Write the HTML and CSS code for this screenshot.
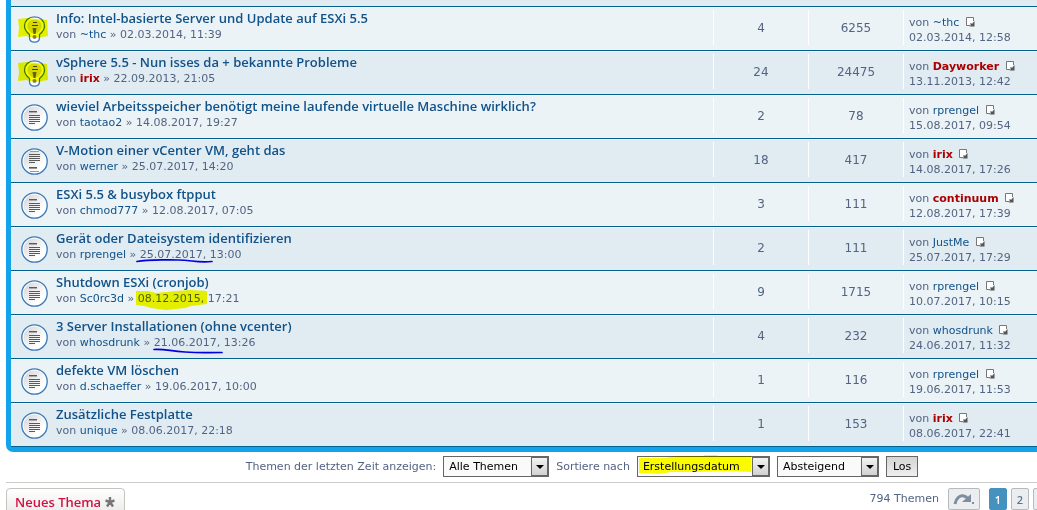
FILE: index.html
```html
<!DOCTYPE html>
<html lang="de">
<head>
<meta charset="utf-8">
<title>Themen</title>
<link rel="stylesheet" href="styles.css">
</head>
<body>
<svg class="defs" aria-hidden="true">
  <defs>
    <linearGradient id="disc" x1="0" y1="0" x2="1" y2="1"><stop offset="0" stop-color="#d4d4d8"/><stop offset=".75" stop-color="#fff"/></linearGradient>
    <symbol id="topic" viewBox="0 0 27 27">
      <circle cx="13.5" cy="13.5" r="12.700" fill="#fff" stroke="#3a7ab8" stroke-width="1.300"/>
      <circle cx="13.5" cy="13.5" r="11" fill="url(#disc)"/>
      <path d="M8 7.500h8M8 11.500h11M8 13.500h11M8 15.500h11M8 17.500h11M8 19.500h6" stroke="#5a5a5a"/>
      <path d="M8 8.500h8" stroke="#aaa"/>
    </symbol>
    <symbol id="topic-own" viewBox="0 0 27 27">
      <circle cx="13.5" cy="13.5" r="12.700" fill="#fff" stroke="#3a7ab8" stroke-width="1.300"/>
      <circle cx="13.5" cy="13.5" r="11" fill="url(#disc)"/>
      <path d="M8 6.500h11M8 8.500h11M8 10.500h11M8 12.500h11M8 14.500h6M8 19.500h8" stroke="#5a5a5a"/>
      <path d="M9 3.500h9M8 20.500h8M9 23.500h9" stroke="#999"/>
    </symbol>
    <symbol id="sticky" viewBox="0 0 27 27">
      <path d="M13.500.8C7.500.8 3.500 4.800 3.500 10c0 4 2.300 6.200 4.600 8C8.800 18.500 8.500 20 8.500 21.500c0 3 2.200 4.700 5 4.700s5-1.700 5-4.700c0-1.500-.3-3 .4-3.500 2.300-1.800 4.600-4 4.600-8 0-5.200-4-9.200-10-9.200z" fill="#fff" stroke="#3a7ab8" stroke-width="1.300"/>
      <path d="M13.500 3.500C9 3.500 6.300 6.500 6.300 10c0 3.500 2.500 5.500 4.500 7.300h5.400c2-1.800 4.500-3.800 4.500-7.300 0-3.500-2.700-6.500-7.200-6.500z" fill="#dddde2"/>
      <path d="M12 6.500h4M11 9.500h6" stroke="#444"/>
      <path d="M11.500 12h4l-1 6h-2z" fill="#666"/><circle cx="13.500" cy="21" r="2" fill="#888"/>
    </symbol>
    <symbol id="latest" viewBox="0 0 9 10">
      <path d="M7.500 4V.5h-7v8H4" fill="#fff" stroke="#777"/>
      <path d="M8.500 4v5.500H3.500L5 8l-1-1 1-1 1 1z" fill="#555"/>
    </symbol>
    <symbol id="bulb-mark" viewBox="0 0 30 20"><path d="M0 1l9-1 20 2 1 16-12 2-10-2-8 1 1-9z" fill="#f6fa00"/></symbol>
  </defs>
</svg>
<div class="page">
  <main class="forum">
    <table class="topics">
      <tbody>
        <tr>
          <td class="icon"><svg class="state"><use href="#sticky"/></svg><svg class="bulb-mark"><use href="#bulb-mark"/></svg></td>
          <td class="topic"><a class="title" href="#">Info: Intel-basierte Server und Update auf ESXi 5.5</a><div>von <a href="#">~thc</a> » 02.03.2014, 11:39</div></td>
          <td class="count"><div>4</div></td><td class="count"><div>6255</div></td>
          <td class="last"><div>von <a href="#">~thc</a> <a href="#" aria-label="Neuester Beitrag"><svg class="latest"><use href="#latest"/></svg></a><br>02.03.2014, 12:58</div></td>
        </tr>
        <tr>
          <td class="icon"><svg class="state"><use href="#sticky"/></svg><svg class="bulb-mark"><use href="#bulb-mark"/></svg></td>
          <td class="topic"><a class="title" href="#">vSphere 5.5 - Nun isses da + bekannte Probleme</a><div>von <a class="mod" href="#">irix</a> » 22.09.2013, 21:05</div></td>
          <td class="count"><div>24</div></td><td class="count"><div>24475</div></td>
          <td class="last"><div>von <a class="mod" href="#">Dayworker</a> <a href="#" aria-label="Neuester Beitrag"><svg class="latest"><use href="#latest"/></svg></a><br>13.11.2013, 12:42</div></td>
        </tr>
        <tr>
          <td class="icon"><svg class="state"><use href="#topic"/></svg></td>
          <td class="topic"><a class="title" href="#">wieviel Arbeitsspeicher benötigt meine laufende virtuelle Maschine wirklich?</a><div>von <a href="#">taotao2</a> » 14.08.2017, 19:27</div></td>
          <td class="count"><div>2</div></td><td class="count"><div>78</div></td>
          <td class="last"><div>von <a href="#">rprengel</a> <a href="#" aria-label="Neuester Beitrag"><svg class="latest"><use href="#latest"/></svg></a><br>15.08.2017, 09:54</div></td>
        </tr>
        <tr>
          <td class="icon"><svg class="state"><use href="#topic-own"/></svg></td>
          <td class="topic"><a class="title" href="#">V-Motion einer vCenter VM, geht das</a><div>von <a href="#">werner</a> » 25.07.2017, 14:20</div></td>
          <td class="count"><div>18</div></td><td class="count"><div>417</div></td>
          <td class="last"><div>von <a class="mod" href="#">irix</a> <a href="#" aria-label="Neuester Beitrag"><svg class="latest"><use href="#latest"/></svg></a><br>14.08.2017, 17:26</div></td>
        </tr>
        <tr>
          <td class="icon"><svg class="state"><use href="#topic"/></svg></td>
          <td class="topic"><a class="title" href="#">ESXi 5.5 &amp; busybox ftpput</a><div>von <a href="#">chmod777</a> » 12.08.2017, 07:05</div></td>
          <td class="count"><div>3</div></td><td class="count"><div>111</div></td>
          <td class="last"><div>von <a class="mod" href="#">continuum</a> <a href="#" aria-label="Neuester Beitrag"><svg class="latest"><use href="#latest"/></svg></a><br>12.08.2017, 17:39</div></td>
        </tr>
        <tr>
          <td class="icon"><svg class="state"><use href="#topic"/></svg></td>
          <td class="topic"><a class="title" href="#">Gerät oder Dateisystem identifizieren</a><div>von <a href="#">rprengel</a> » <span class="marked">25.07.2017,<svg class="stroke" viewBox="0 0 78 6"><path d="M1 3.500C12 1 28 2 42 2s18 3 34 1.500" fill="none" stroke="#0000e0" stroke-width="1.700" stroke-linecap="round"/></svg></span> 13:00</div></td>
          <td class="count"><div>2</div></td><td class="count"><div>111</div></td>
          <td class="last"><div>von <a href="#">JustMe</a> <a href="#" aria-label="Neuester Beitrag"><svg class="latest"><use href="#latest"/></svg></a><br>25.07.2017, 17:29</div></td>
        </tr>
        <tr>
          <td class="icon"><svg class="state"><use href="#topic"/></svg></td>
          <td class="topic"><a class="title" href="#">Shutdown ESXi (cronjob)</a><div>von <a href="#">Sc0rc3d</a> » <span class="marked">08.12.2015,<svg class="fill" viewBox="0 0 71 20"><path d="M0 1l12 0 8 2 20-2 14-1 17 1v13l-16 2-6 2-19 2-15-2-7-2-8-1z" fill="#f6fa00"/></svg></span> 17:21</div></td>
          <td class="count"><div>9</div></td><td class="count"><div>1715</div></td>
          <td class="last"><div>von <a href="#">rprengel</a> <a href="#" aria-label="Neuester Beitrag"><svg class="latest"><use href="#latest"/></svg></a><br>10.07.2017, 10:15</div></td>
        </tr>
        <tr>
          <td class="icon"><svg class="state"><use href="#topic"/></svg></td>
          <td class="topic"><a class="title" href="#">3 Server Installationen (ohne vcenter)</a><div>von <a href="#">whosdrunk</a> » <span class="marked">21.06.2017,<svg class="stroke low" viewBox="0 0 78 6"><path d="M4 1.500C16 1 19 3 35 4s18 .5 37 .5" fill="none" stroke="#0000e0" stroke-width="1.700" stroke-linecap="round"/></svg></span> 13:26</div></td>
          <td class="count"><div>4</div></td><td class="count"><div>232</div></td>
          <td class="last"><div>von <a href="#">whosdrunk</a> <a href="#" aria-label="Neuester Beitrag"><svg class="latest"><use href="#latest"/></svg></a><br>24.06.2017, 11:32</div></td>
        </tr>
        <tr>
          <td class="icon"><svg class="state"><use href="#topic"/></svg></td>
          <td class="topic"><a class="title" href="#">defekte VM löschen</a><div>von <a href="#">d.schaeffer</a> » 19.06.2017, 10:00</div></td>
          <td class="count"><div>1</div></td><td class="count"><div>116</div></td>
          <td class="last"><div>von <a href="#">rprengel</a> <a href="#" aria-label="Neuester Beitrag"><svg class="latest"><use href="#latest"/></svg></a><br>19.06.2017, 11:53</div></td>
        </tr>
        <tr>
          <td class="icon"><svg class="state"><use href="#topic"/></svg></td>
          <td class="topic"><a class="title" href="#">Zusätzliche Festplatte</a><div>von <a href="#">unique</a> » 08.06.2017, 22:18</div></td>
          <td class="count"><div>1</div></td><td class="count"><div>153</div></td>
          <td class="last"><div>von <a class="mod" href="#">irix</a> <a href="#" aria-label="Neuester Beitrag"><svg class="latest"><use href="#latest"/></svg></a><br>08.06.2017, 22:41</div></td>
        </tr>
      </tbody>
    </table>
  </main>
  <form class="sort">
    <label for="days">Themen der letzten Zeit anzeigen:</label>
    <span class="select days"><select id="days"><option>Alle Themen</option></select><span class="arrow"></span></span>
    <label for="key">Sortiere nach</label>
    <span class="select key"><select id="key"><option>Erstellungsdatum</option></select><svg class="key-mark" viewBox="0 0 112 20"><path d="M0 3l26 0 10-2 28 0 2-1 12 0 1 1h33v16l-20-1-35 1-25 0-12 2-20-1z" fill="#ffff00"/></svg><span class="arrow"></span></span>
    <span class="select dir"><select id="dir" aria-label="Richtung"><option>Absteigend</option></select><span class="arrow"></span></span>
    <button class="go" type="button">Los</button>
  </form>
  <div class="actions">
    <a class="new" href="#">Neues Thema <svg class="star" viewBox="0 0 12 12"><path d="M6 6V1M6 6L1.500 4.500M6 6l4.500-1.500M6 6l-3 4.500M6 6l3 4.500" stroke="#777" stroke-width="2.400" fill="none"/></svg></a>
    <nav class="pages">
      <span class="total">794 Themen</span>
      <button class="jump" type="button" aria-label="Gehe zu Seite"><svg viewBox="0 0 22 12"><path d="M2 11C3 5 7 2 11 3c2 .4 3 1.400 4 3" fill="none" stroke="#7d8ea0" stroke-width="3"/><path d="M18 1v8H9z" fill="#7d8ea0"/><path d="M19 9h2v2h-2z" fill="#7d8ea0"/></svg></button>
      <span class="num current">1</span><a class="num" href="#">2</a><a class="num" href="#" aria-label="Seite 3"></a>
    </nav>
  </div>
</div>
</body>
</html>
```
FILE: styles.css
```css
* { box-sizing: border-box; }
html { overflow: hidden; }
body {
  margin: 0;
  overflow: hidden;
  background: #fff;
  color: #536482;
  font: 11px/15px "DejaVu Sans", Verdana, sans-serif;
}
a { color: #105289; text-decoration: none; }
.defs { position: absolute; width: 0; height: 0; }
/* The board is wider than the viewport and runs off its right side. */
.page { margin: 0 -121px 0 6px; }

.forum {
  padding: 6px 5px 5px;
  background: linear-gradient(#e1ebf2, #e1ebf2) 5px 0 / 100% 6px no-repeat #12a3eb;
  border-radius: 0 0 7px 7px;
}
.topics { width: 100%; table-layout: auto; border-collapse: separate; border-spacing: 0; border-top: 1px solid #00608f; }
.topics td { height: 44px; padding: 0; border-top: 1px solid #fff; border-bottom: 1px solid #00608f; background: #ecf3f7; }
.topics tr:nth-child(even) td { background: #e1ebf2; }
.topics td.icon { position: relative; width: 45px; padding: 8px 0 0 10px; vertical-align: top; }
.state { display: block; width: 27px; height: 27px; }
.bulb-mark { position: absolute; left: 7px; top: 10px; width: 30px; height: 20px; mix-blend-mode: multiply; }
.topics .topic { vertical-align: top; padding-top: 2px; }
.title { display: block; font: 600 13px/17px "Open Sans", "Trebuchet MS", sans-serif; }
.mod { color: #a00; font-weight: bold; }
.marked { position: relative; display: inline-block; }
.stroke { position: absolute; left: -4px; top: 11px; width: 78px; height: 6px; }
.stroke.low { top: 13px; }
.fill { position: absolute; left: -2px; top: -1px; width: 71px; height: 20px; mix-blend-mode: multiply; }
.topics .count { width: 95px; vertical-align: top; padding-top: 2px; font-size: 12px; text-align: center; }
.count div, .last div { height: 35px; border-left: 1px solid #fff; }
.count div { line-height: 36px; }
.topics .last { width: 250px; vertical-align: top; padding-top: 2px; }
.last div { padding: 5px 0 0 5px; }
.latest { width: 9px; height: 10px; margin-left: 3px; vertical-align: -1px; }

.sort { display: flex; justify-content: center; align-items: center; gap: 7px; padding: 4px 0 5px; border-bottom: 1px solid #ccc; }
.sort label { line-height: 21px; }
.select { position: relative; height: 21px; }
.days { width: 106px; }
.key { width: 133px; }
.dir { width: 102px; }
.sort select {
  width: 100%; height: 21px; margin: 0; padding: 0 0 0 5px; appearance: none;
  border: 1px solid #666; border-radius: 0; background: #fafafa; color: #000;
  font: inherit;
}
.arrow { position: absolute; right: 1px; top: 1px; width: 17px; height: 19px; border: 1px solid #666; background: linear-gradient(#f2f2f2, #d2d2d2); pointer-events: none; }
.arrow::after { content: ""; position: absolute; left: 4px; top: 7px; border: 4px solid transparent; border-top-color: #000; border-bottom: 0; }
.key-mark { position: absolute; left: 2px; top: -1px; width: 112px; height: 20px; mix-blend-mode: multiply; pointer-events: none; }
.go { height: 21px; padding: 0 6px; border: 1px solid #666; background: linear-gradient(#d4d4d4, #efefef); color: #000; font: inherit; }

.actions { display: flex; justify-content: space-between; align-items: flex-start; padding-top: 5px; }
.new {
  display: flex; align-items: center; gap: 3px; padding: 0 8px; height: 28px;
  border: 1px solid #c7c3bf; border-radius: 4px; background: linear-gradient(#fff, #e9e9e9);
  color: #d31141; font: 600 13px/26px "Open Sans", sans-serif;
}
.star { width: 12px; height: 12px; }
.pages { display: flex; gap: 4px; padding-right: 107px; }
.total { margin-right: 5px; line-height: 22px; }
.jump { display: flex; align-items: center; justify-content: center; width: 32px; height: 22px; margin-right: 5px; padding: 0; border: 1px solid #b4bac0; border-radius: 2px; background: #ecedee; }
.jump svg { width: 22px; height: 12px; }
.num { width: 18px; height: 22px; border: 1px solid #b4bac0; border-radius: 2px; background: #ecedee; color: #5c758c; font: 600 11px/21px "Open Sans", sans-serif; text-align: center; }
.num.current { border-color: #4692bf; background: #4692bf; color: #fff; }
```
